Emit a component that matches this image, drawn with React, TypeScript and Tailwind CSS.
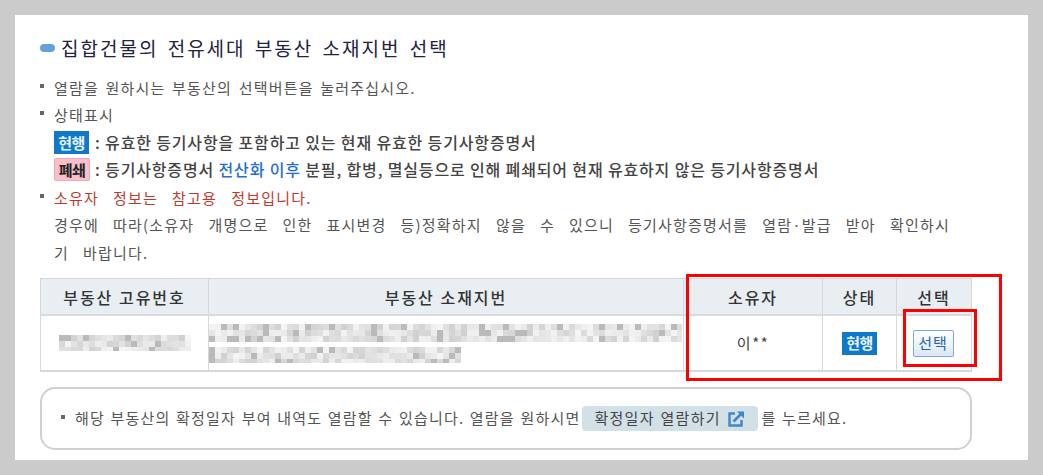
const FONT = "font-['Noto_Sans_CJK_KR','Liberation_Sans',sans-serif]";

function Mosaic({ width, height, cell, rows, seed }: { width: number; height: number; cell: number; rows: [number, number, number][]; seed: number }) {
  const rects: React.ReactElement[] = [];
  let s = seed;
  rows.forEach(([y, h, w], ri) => {
    for (let x = 0; x < w; x += cell) {
      s = (s * 9301 + 49297) % 233280;
      const v = s / 233280;
      const g = Math.round(v > 0.88 ? 186 : 208 + v * 42);
      rects.push(<rect key={`${ri}-${x}`} x={x} y={y} width={cell} height={h} fill={`rgb(${g},${g},${g})`} />);
    }
  });
  return (
    <svg width={width} height={height} viewBox={`0 0 ${width} ${height}`} className="block">
      {rects}
    </svg>
  );
}

function Bullet({ children, className = "" }: { children: React.ReactNode; className?: string }) {
  return (
    <div className={`flex items-center h-[27px] ${className}`}>
      <span className="w-[4px] h-[4px] bg-[#666] mr-[10px] shrink-0 mb-[4px]" />
      <span>{children}</span>
    </div>
  );
}

function Current() {
  return (
    <span className="inline-flex items-center justify-center w-[35px] h-[23px] bg-[#0f78c9] text-[#e6f4ff] text-[15px] font-bold tracking-[-0.5px]">
      현행
    </span>
  );
}

export default function App() {
  return (
    <div className={`${FONT} w-[1043px] h-[475px] bg-[#cbcbcb] p-[15px] overflow-hidden relative`}>
      <div className="w-[1013px] h-[445px] bg-white pl-[25px] pt-[19px]">
        <div className="flex items-center h-[28px] mb-[12px]">
          <span className="w-[15px] h-[8px] rounded-full bg-[#62a3dc] mr-[6px] shrink-0" />
          <h1 className="text-[19px] leading-[28px] text-[#222244] font-normal tracking-[2px] [word-spacing:3px] whitespace-nowrap">
            집합건물의 전유세대 부동산 소재지번 선택
          </h1>
        </div>

        <div className="text-[15px] leading-[27px] text-[#555] tracking-[1.2px] [word-spacing:2px]">
          <Bullet>열람을 원하시는 부동산의 선택버튼을 눌러주십시오.</Bullet>
          <Bullet>상태표시</Bullet>
          <div className="flex items-center h-[28px] pl-[14px] text-[16px] font-medium tracking-[0.85px] [word-spacing:0px] text-[#444] whitespace-nowrap">
            <Current />
            <span className="ml-[6px]">: 유효한 등기사항을 포함하고 있는 현재 유효한 등기사항증명서</span>
          </div>
          <div className="flex items-center h-[27px] pl-[14px] text-[16px] font-medium tracking-[0.85px] [word-spacing:0px] text-[#444] whitespace-nowrap">
            <span className="inline-flex items-center justify-center w-[36px] h-[23px] bg-[#f8c0ca] border border-[#f2a8b6] rounded-[2px] text-[#222] text-[15px] font-bold tracking-[-0.5px]">
              폐쇄
            </span>
            <span className="ml-[5px]">
              : 등기사항증명서 <span className="text-[#1f6fd8]">전산화 이후</span> 분필, 합병, 멸실등으로 인해 폐쇄되어 현재 유효하지 않은 등기사항증명서
            </span>
          </div>
          <Bullet className="text-[#c0392b] mt-[1px] [word-spacing:9.5px]">소유자 정보는 참고용 정보입니다.</Bullet>
          <p className="pl-[14px] w-[914px] leading-[28px] [word-spacing:9.5px] break-all">
            경우에 따라(소유자 개명으로 인한 표시변경 등)정확하지 않을 수 있으니 등기사항증명서를 열람·발급 받아 확인하시기 바랍니다.
          </p>
        </div>

        <div className="mt-[11px] w-[932px] border border-[#d5d8dd] border-b-[2px]">
          <div className="grid grid-cols-[167px_475px_139px_74px_1fr] h-[37px] bg-[#e9eef3] text-[16px] font-medium tracking-[2px] text-[#333] border-b-[2px] border-[#d8dbe0]">
            <div className="flex items-center justify-center">부동산 고유번호</div>
            <div className="flex items-center justify-center border-l border-[#d5d8dd]">부동산 소재지번</div>
            <div className="flex items-center justify-center border-l border-[#d5d8dd]">소유자</div>
            <div className="flex items-center justify-center border-l border-[#d5d8dd]">상태</div>
            <div className="flex items-center justify-center border-l border-[#d5d8dd]">선택</div>
          </div>
          <div className="grid grid-cols-[167px_475px_139px_74px_1fr] h-[54px] text-[15px] text-[#444]">
            <div className="flex items-center justify-center">
              <Mosaic width={132} height={20} cell={6} seed={17} rows={[[2, 6, 132], [8, 6, 132], [14, 4, 132]]} />
            </div>
            <div className="flex items-start justify-start border-l border-[#d5d8dd]">
              <Mosaic width={473} height={53} cell={6} seed={91} rows={[[8, 6, 473], [14, 6, 473], [20, 6, 473], [31, 6, 250], [37, 6, 250], [43, 4, 250]]} />
            </div>
            <div className="flex items-center justify-center border-l border-[#d5d8dd] tracking-[1.5px]">이**</div>
            <div className="flex items-center justify-center border-l border-[#d5d8dd]">
              <Current />
            </div>
            <div className="flex items-center justify-center border-l border-[#d5d8dd] pr-[2px]">
              <button className="w-[41px] h-[27px] border border-[#7fa8dc] rounded-[2px] bg-gradient-to-b from-white to-[#dbe7f5] text-[#2a62b5] text-[15px] tracking-[1px]">
                선택
              </button>
            </div>
          </div>
        </div>

        <div className="mt-[15px] w-[932px] h-[63px] border-[2px] border-[#d0d0d0] rounded-[15px] flex items-center pl-[19px] text-[15px] tracking-[1.2px] [word-spacing:1px] text-[#555] whitespace-nowrap">
          <span className="w-[4px] h-[4px] bg-[#666] mr-[10px] shrink-0 mb-[3px]" />
          <span>해당 부동산의 확정일자 부여 내역도 열람할 수 있습니다. 열람을 원하시면</span>
          <span className="ml-[2px] inline-flex items-center w-[176px] h-[25px] pl-[12px] rounded-[4px] bg-[#d2e1e8] text-[#444] tracking-[1.3px]">
            확정일자 열람하기
            <svg width="20" height="20" viewBox="0 0 20 20" fill="none" className="ml-[5px]">
              <path d="M9 4.5H3.5v12h12V11" stroke="#3f86c6" strokeWidth="2.4" />
              <path d="M7.5 12.5 16 4" stroke="#3f86c6" strokeWidth="2.6" />
              <path d="M11 2.5h7v7z" fill="#3f86c6" />
            </svg>
          </span>
          <span className="ml-[3px]">를 누르세요.</span>
        </div>
      </div>

      <div className="absolute left-[686px] top-[274px] w-[316px] h-[107px] border-[3px] border-[#ff0000] pointer-events-none" />
      <div className="absolute left-[903px] top-[309px] w-[74px] h-[58px] border-[3px] border-[#ff0000] pointer-events-none" />
    </div>
  );
}
